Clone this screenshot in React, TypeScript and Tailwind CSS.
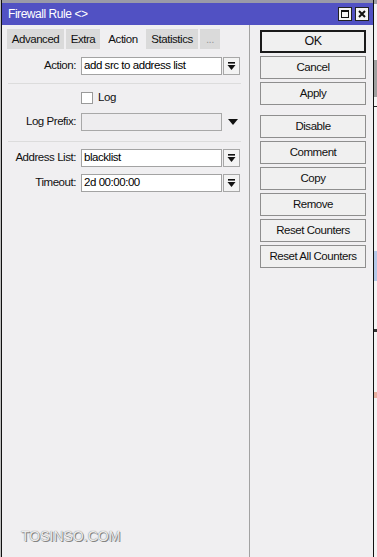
// Winbox style "Firewall Rule" dialog, Action tab

const FONT = "font-['Liberation_Sans',Arial,sans-serif]"

const TABS = [
  { label: 'Advanced', w: 'w-[57px]' },
  { label: 'Extra', w: 'w-[34px]' },
  { label: 'Action', w: 'w-[42px]', active: true },
  { label: 'Statistics', w: 'w-[52px]' },
  { label: '...', w: 'w-[20px]', dim: true },
]

const BUTTONS_TOP = ['OK', 'Cancel', 'Apply']
const BUTTONS_BOTTOM = ['Disable', 'Comment', 'Copy', 'Remove', 'Reset Counters', 'Reset All Counters']

function DropIcon() {
  return (
    <svg width="9" height="9" viewBox="0 0 9 9">
      <rect x="1" y="0" width="7" height="1.6" fill="#111" />
      <path d="M0.5 3 H8.5 L4.5 8 Z" fill="#111" />
    </svg>
  )
}

function DropButton() {
  return (
    <div className="ml-[1px] w-[17px] h-[18px] border border-[#a7a7a7] bg-[#f3f3f3] flex items-center justify-center">
      <DropIcon />
    </div>
  )
}

function Label({ children }: { children: React.ReactNode }) {
  return <div className="w-[75px] text-right pr-[1px] text-[#111]">{children}</div>
}

function Field({ label, value }: { label: string; value: string }) {
  return (
    <div className="flex items-center h-[18px]">
      <Label>{label}</Label>
      <div className="ml-[4px] w-[141px] h-[18px] border border-[#a3a3a3] bg-white px-[2px] flex items-center text-black leading-none">
        {value}
      </div>
      <DropButton />
    </div>
  )
}

function Separator() {
  return <div className="ml-[6px] w-[233px] h-px bg-[#dcdcdc]" />
}

function WinButton({ label, primary }: { label: string; primary?: boolean }) {
  return (
    <div
      className={`w-[106px] h-[23px] flex items-center justify-center bg-[#f0f0f0] text-[#111] ${
        primary ? 'border-2 border-[#1a1a1a] text-[12.5px]' : 'border border-[#8e8e8e]'
      }`}
    >
      {label}
    </div>
  )
}

export default function App() {
  return (
    <div className={`w-[377px] h-[557px] flex bg-[#bdbdbd] overflow-hidden ${FONT} text-[11.5px] tracking-[-0.45px]`}>
      <div className="ml-[1px] w-[373px] h-full flex flex-col border-x border-[#111] bg-[#f0eff1]">
        {/* title bar */}
        <div className="h-[3px] bg-[#9a9aa8]" />
        <div className="h-[22px] bg-[#5151c3] flex items-center pl-[6px] pr-[4px]">
          <span className="text-white text-[12px]">Firewall Rule &lt;&gt;</span>
          <div className="ml-auto flex gap-[3px]">
            <div className="w-[14px] h-[14px] bg-[#f4f4f4] border border-[#222] flex items-center justify-center">
              <div className="w-[8px] h-[8px] border border-[#111] border-t-2" />
            </div>
            <div className="w-[14px] h-[14px] bg-[#f4f4f4] border border-[#222] flex items-center justify-center">
              <svg width="8" height="8" viewBox="0 0 8 8">
                <path d="M1 1 L7 7 M7 1 L1 7" stroke="#111" strokeWidth="2" />
              </svg>
            </div>
          </div>
        </div>

        <div className="flex flex-1">
          {/* left: tabs + form */}
          <div className="w-[248px] flex flex-col border-r border-[#a2a2a2]">
            <div className="flex gap-[2px] pl-[5px] pt-[4px] h-[24px]">
              {TABS.map(t => (
                <div
                  key={t.label}
                  className={`${t.w} h-[20px] flex justify-center ${
                    t.active ? 'bg-[#f0eff1] items-start pt-[2px]' : 'bg-[#dadada] items-center pt-[1px]'
                  } ${t.dim ? 'text-[#9a9a9a]' : 'text-[#111]'}`}
                >
                  {t.label}
                </div>
              ))}
            </div>

            <div className="flex flex-col pt-[8px]">
              <Field label="Action:" value="add src to address list" />
              <div className="mt-[8px]">
                <Separator />
              </div>
              <div className="mt-[8px] flex items-center h-[12px]">
                <div className="ml-[79px] w-[12px] h-[12px] border border-[#9a9a9a] bg-white" />
                <span className="ml-[5px] text-[#111]">Log</span>
              </div>
              <div className="mt-[9px] flex items-center h-[18px]">
                <Label>Log Prefix:</Label>
                <div className="ml-[4px] w-[141px] h-[18px] border border-[#a8a8a8] bg-[#eeedef]" />
                <svg className="ml-[6px]" width="10" height="7" viewBox="0 0 10 7">
                  <path d="M0 0 H10 L5 6 Z" fill="#111" />
                </svg>
              </div>
              <div className="mt-[10px]">
                <Separator />
              </div>
              <div className="mt-[7px]">
                <Field label="Address List:" value="blacklist" />
              </div>
              <div className="mt-[7px]">
                <Field label="Timeout:" value="2d 00:00:00" />
              </div>
            </div>

            <div className="mt-auto mb-[10px] pl-[19px] text-[14px] tracking-[0px] text-[#ececec] [text-shadow:0_0_1px_#666,1px_1px_0_#888]">
              TOSINSO.COM
            </div>
          </div>

          {/* right: buttons */}
          <div className="flex-1 pl-[10px] pt-[5px] flex flex-col">
            <div className="flex flex-col gap-[3px]">
              {BUTTONS_TOP.map((b, i) => (
                <WinButton key={b} label={b} primary={i === 0} />
              ))}
            </div>
            <div className="mt-[10px] flex flex-col gap-[3px]">
              {BUTTONS_BOTTOM.map(b => (
                <WinButton key={b} label={b} />
              ))}
            </div>
          </div>
        </div>
      </div>

      {/* sliver of the window behind */}
      <div className="w-[3px] h-full flex flex-col bg-[#f4f4f4]">
        <div className="h-[4px] bg-[#a0a0a8]" />
        <div className="mt-[56px] h-[37px] bg-[#a0a0a0]" />
        <div className="mt-[9px] h-px bg-[#222]" />
        <div className="mt-[144px] h-[30px] bg-[#b4c8e8]" />
        <div className="mt-[48px] h-[3px] bg-[#333]" />
        <div className="mt-[60px] h-[6px] bg-[#e8b0a0]" />
      </div>
    </div>
  )
}
